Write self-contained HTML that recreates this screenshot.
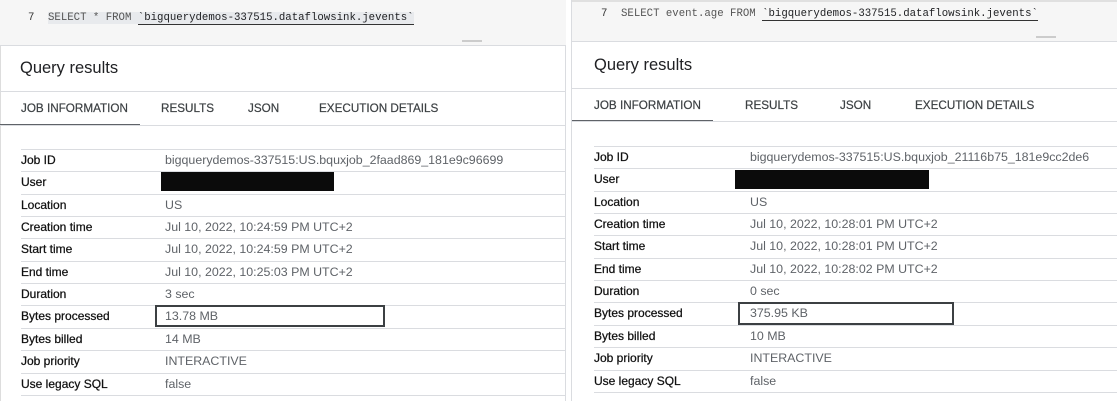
<!DOCTYPE html>
<html><head><meta charset="utf-8"><style>
*{margin:0;padding:0;box-sizing:border-box}
body{width:1117px;height:401px;overflow:hidden;background:#fff;font-family:"Liberation Sans",Arial,sans-serif;color:#202124;position:relative}
.a{position:absolute;white-space:nowrap}
.p{position:absolute;background:#fff}
.code{font-family:"Liberation Mono",monospace;font-size:10.7px;color:#555}
.code u{color:#202124;text-decoration:none;border-bottom:1px solid #333}
.qr{font-size:16.5px;color:#202124}
.tab{font-size:11.7px;color:#3c4043;-webkit-text-stroke:0.2px #3c4043}
.lab{font-size:12px;color:#111;-webkit-text-stroke:0.25px #111}
.val{font-size:12.4px;color:#5f6368}
.ln{position:absolute;height:1px;background:#dadce0}
.blk{position:absolute;background:#0b0b0b}
.hl{position:absolute;border:2px solid #3c4043}
</style></head><body>
<div class="p" style="left:0;top:0;width:566px;height:401px;border-right:1px solid #dadce0;border-left:1px solid #ddd"></div>
<div class="a" style="left:0;top:0;width:566px;height:46px;background:#f6f6f6;border-bottom:1px solid #dadce0"></div>
<div class="a code" style="left:28px;top:-8px;color:#777">6</div>
<div class="a code" style="left:28px;top:12px;color:#333">7</div>
<div class="a code" style="left:48px;top:12px;background:#e8eaed">SELECT *  FROM <u>`bigquerydemos-337515.dataflowsink.jevents`</u></div>
<div class="a" style="left:462px;top:40px;width:20px;height:2px;background:#ccc"></div>
<div class="a qr" style="left:20px;top:59px">Query results</div>
<div class="ln" style="left:0;top:91px;width:566px"></div>
<div class="a tab" style="left:21px;top:102px">JOB INFORMATION</div>
<div class="a tab" style="left:161px;top:102px">RESULTS</div>
<div class="a tab" style="left:248px;top:102px">JSON</div>
<div class="a tab" style="left:319px;top:102px">EXECUTION DETAILS</div>
<div class="a" style="left:0;top:124px;width:140px;height:2px;background:#5f6368"></div>
<div class="ln" style="left:0;top:125px;width:566px"></div>
<div class="p" style="left:571px;top:0;width:546px;height:401px;border-left:1px solid #dadce0"></div>
<div class="a" style="left:572px;top:0;width:545px;height:42px;background:#f6f6f6;border-bottom:1px solid #dadce0;border-top:2px solid #e0e0e0"></div>
<div class="a code" style="left:601px;top:8px;color:#333">7</div>
<div class="a code" style="left:621px;top:8px">SELECT event.age  FROM <u>`bigquerydemos-337515.dataflowsink.jevents`</u></div>
<div class="a" style="left:1036px;top:36px;width:20px;height:2px;background:#ccc"></div>
<div class="a qr" style="left:594px;top:56px">Query results</div>
<div class="ln" style="left:572px;top:88px;width:545px"></div>
<div class="a tab" style="left:594px;top:99px">JOB INFORMATION</div>
<div class="a tab" style="left:745px;top:99px">RESULTS</div>
<div class="a tab" style="left:840px;top:99px">JSON</div>
<div class="a tab" style="left:915px;top:99px">EXECUTION DETAILS</div>
<div class="a" style="left:572px;top:120px;width:141px;height:2px;background:#5f6368"></div>
<div class="ln" style="left:572px;top:121px;width:545px"></div>
<div id="rows"></div>
<script>
var L=["Job ID","User","Location","Creation time","Start time","End time","Duration","Bytes processed","Bytes billed","Job priority","Use legacy SQL"];
var V1=["bigquerydemos-337515:US.bquxjob_2faad869_181e9c96699","","US","Jul 10, 2022, 10:24:59 PM UTC+2","Jul 10, 2022, 10:24:59 PM UTC+2","Jul 10, 2022, 10:25:03 PM UTC+2","3 sec","13.78 MB","14 MB","INTERACTIVE","false"];
var V2=["bigquerydemos-337515:US.bquxjob_21116b75_181e9cc2de6","","US","Jul 10, 2022, 10:28:01 PM UTC+2","Jul 10, 2022, 10:28:01 PM UTC+2","Jul 10, 2022, 10:28:02 PM UTC+2","0 sec","375.95 KB","10 MB","INTERACTIVE","false"];
var h="";
function side(lx,vx,y0,V,w){for(var i=0;i<11;i++){var y=y0+i*22.35;h+='<div class="ln" style="left:'+lx+'px;top:'+(y-11)+'px;width:'+w+'px"></div>';h+='<div class="a lab" style="left:'+lx+'px;top:'+(y-7)+'px">'+L[i]+'</div>';h+='<div class="a val" style="left:'+vx+'px;top:'+(y-7)+'px">'+V[i]+'</div>';}h+='<div class="ln" style="left:'+lx+'px;top:'+(y0+11*22.35-11)+'px;width:'+w+'px"></div>';}
side(21,165,160,V1,545);side(594,750,157,V2,523);
h+='<div class="blk" style="left:161px;top:172px;width:173px;height:19px"></div>';
h+='<div class="blk" style="left:735px;top:170px;width:194px;height:19px"></div>';
h+='<div class="hl" style="left:155px;top:305px;width:230px;height:22px"></div>';
h+='<div class="hl" style="left:738px;top:302px;width:216px;height:23px"></div>';
document.getElementById("rows").outerHTML=h;
</script>
</body></html>
